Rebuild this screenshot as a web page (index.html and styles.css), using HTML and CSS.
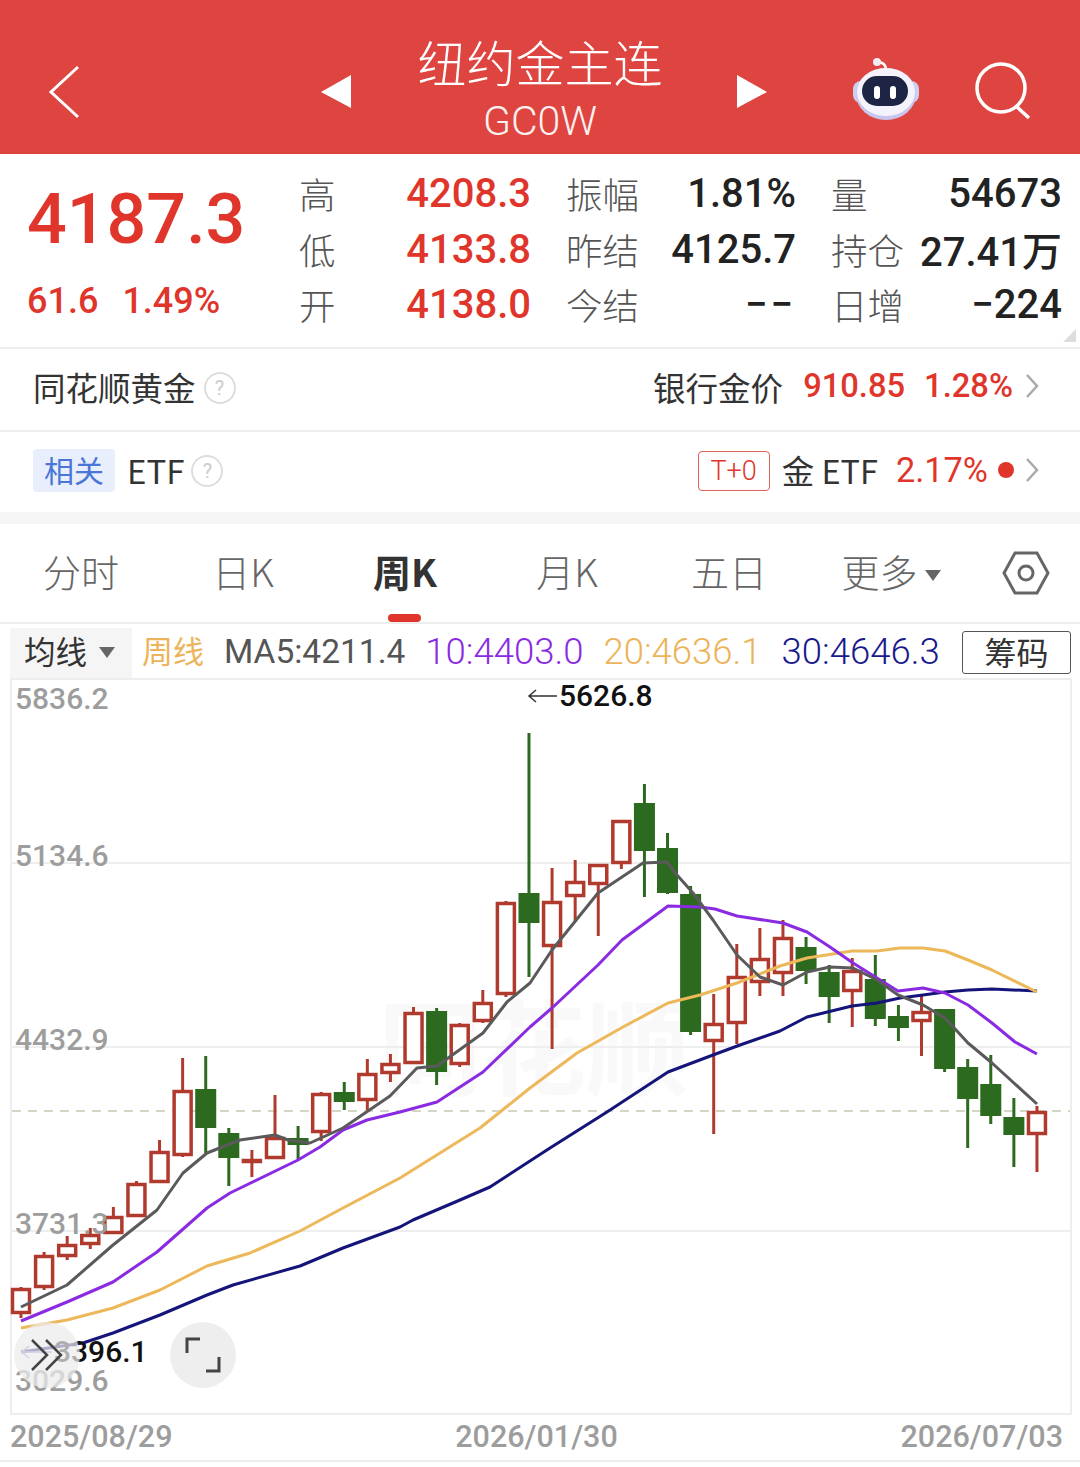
FILE: index.html
```html
<!DOCTYPE html>
<html>

<head>
  <meta charset="utf-8">
  <link rel="stylesheet" href="styles.css">
</head>

<body>
<!-- header -->
  <div class="header">
    <svg class="icon-back" width="32" height="56" viewBox="0 0 32 56"><path d="M30 3 L3 28 L30 53" /></svg>
    <svg class="icon-prev" width="32" height="34" viewBox="0 0 32 34"><path d="M31 0 L1 17 L31 33 Z" /></svg>
    <div class="title-box">
      <div class="title">纽约金主连</div>
      <div class="code">GC0W</div>
    </div>
    <svg class="icon-next" width="32" height="34" viewBox="0 0 32 34"><path d="M1 0 L31 17 L1 33 Z" /></svg>
    <svg class="icon-robot" width="68" height="64" viewBox="0 0 68 64">
      <path class="robot-line" d="M25 5 C31 5 34 8 34 13" />
      <circle class="robot-ball" cx="25" cy="5" r="4" />
      <rect class="robot-ear" x="1" y="24" width="66" height="22" rx="8" />
      <ellipse class="robot-shade" cx="34" cy="37" rx="30" ry="26" />
      <ellipse class="robot-head" cx="34" cy="35" rx="29" ry="24" />
      <rect class="robot-face" x="10" y="19" width="46" height="30" rx="15" />
      <rect class="robot-eye" x="22" y="29" width="6" height="13" rx="3" />
      <rect class="robot-eye" x="38" y="29" width="6" height="13" rx="3" />
    </svg>
    <svg class="icon-search" width="58" height="58" viewBox="0 0 58 58"><circle cx="27" cy="26" r="24" /><path d="M42 44 L55 56" /></svg>
  </div>

<!-- price -->
  <div class="stats">
    <div class="summary">
      <div class="price">4187.3</div>
      <div class="change"><span>61.6</span><span>1.49%</span></div>
    </div>
    <div class="stat-col col1">
      <div class="stat"><span class="label">高</span><span class="value red">4208.3</span></div>
      <div class="stat"><span class="label">低</span><span class="value red">4133.8</span></div>
      <div class="stat"><span class="label">开</span><span class="value red">4138.0</span></div>
    </div>
    <div class="stat-col">
      <div class="stat"><span class="label">振幅</span><span class="value">1.81%</span></div>
      <div class="stat"><span class="label">昨结</span><span class="value">4125.7</span></div>
      <div class="stat"><span class="label">今结</span><span class="value dashes">−−</span></div>
    </div>
    <div class="stat-col col3">
      <div class="stat"><span class="label">量</span><span class="value">54673</span></div>
      <div class="stat"><span class="label">持仓</span><span class="value">27.41万</span></div>
      <div class="stat"><span class="label">日增</span><span class="value">−224</span></div>
    </div>
    <div class="corner"></div>
  </div>

<!-- gold rows -->
  <div class="info-row line">
    <span class="info-name">同花顺黄金</span>
    <span class="help">?</span>
    <span class="info-right">
      <span class="info-name">银行金价</span>
      <span class="info-num first">910.85</span>
      <span class="info-num">1.28%</span>
      <svg class="chevron" width="14" height="26" viewBox="0 0 14 26"><path d="M2 2 L12 13 L2 24" /></svg>
    </span>
  </div>
  <div class="info-row">
    <span class="tag">相关</span>
    <span class="info-name etf-name">ETF</span>
    <span class="help small-gap">?</span>
    <span class="info-right">
      <span class="t0">T+0</span>
      <span class="info-name">金 ETF</span>
      <span class="info-num etf">2.17%</span>
      <span class="dot"></span>
      <svg class="chevron" width="14" height="26" viewBox="0 0 14 26"><path d="M2 2 L12 13 L2 24" /></svg>
    </span>
  </div>
  <div class="strip"></div>

<!-- tabs -->
  <div class="tabs">
    <div class="tab">分时</div>
    <div class="tab">日K</div>
    <div class="tab active">周K</div>
    <div class="tab">月K</div>
    <div class="tab">五日</div>
    <div class="tab">更多<span class="more-arrow"></span></div>
    <div class="tab-set">
      <svg width="48" height="44" viewBox="0 0 48 44"><path d="M13 2 H35 L46 22 L35 42 H13 L2 22 Z" /><circle cx="24" cy="22" r="7" /></svg>
    </div>
  </div>

<!-- ma -->
  <div class="ma-row">
    <div class="ma-select"><span class="ma-name">均线</span><span class="ma-arrow"></span></div>
    <span class="ma-week yellow">周线</span>
    <span class="ma ma5">MA5:4211.4</span>
    <span class="ma purple">10:4403.0</span>
    <span class="ma yellow">20:4636.1</span>
    <span class="ma navy">30:4646.3</span>
    <div class="chips">筹码</div>
  </div>

<!-- chart -->
  <div class="chart">
    <div class="watermark">同花顺</div>
    <svg id="kline" class="kline" width="1058" height="733" viewBox="12 680 1058 733"></svg>
    <span class="axis y1">5836.2</span>
    <span class="axis y2">5134.6</span>
    <span class="axis y3">4432.9</span>
    <span class="axis y4">3731.3</span>
    <span class="axis y5">3029.6</span>
    <div class="mark mark-high">
      <svg width="32" height="16" viewBox="0 0 32 16"><path d="M30 8 H2 M9 2 L2 8 L9 14" /></svg>
      <span>5626.8</span>
    </div>
    <div class="mark mark-low">
      <svg width="34" height="16" viewBox="0 0 34 16"><path d="M32 8 H2 M9 2 L2 8 L9 14" /></svg>
      <span>3396.1</span>
    </div>
    <div class="round-btn btn-expand">
      <svg width="34" height="34" viewBox="0 0 34 34"><path d="M2 2 L17 17 L2 32 M16 2 L31 17 L16 32" /></svg>
    </div>
    <div class="round-btn btn-full">
      <svg width="36" height="36" viewBox="0 0 36 36"><path d="M2 16 V2 H15 M34 20 V34 H21" /></svg>
    </div>
  </div>

<!-- dates -->
  <div class="dates">
    <span>2025/08/29</span>
    <span>2026/01/30</span>
    <span>2026/07/03</span>
  </div>

  <script src="chart.js"></script>
</body>

</html>
```

FILE: styles.css
```css
body {
  margin: 0;
  background-color: #fff;
  font-family: "Roboto", "Noto Sans CJK SC", sans-serif;
  overflow: hidden;
}

.red {
  color: #e0352b;
}

.yellow {
  color: #ecb45a;
}

.purple {
  color: #8a2be2;
}

.navy {
  color: #1a1a8c;
}

/* header */
.header {
  display: flex;
  align-items: center;
  height: 124px;
  padding: 30px 0 0 48px;
  background-color: #de4541;
}

.header svg path,
.header svg circle {
  fill: none;
  stroke: #fff;
}

.icon-back path {
  stroke-width: 3;
}

.icon-prev {
  margin-left: 240px;
}

.header .icon-prev path,
.header .icon-next path {
  fill: #fff;
  stroke: none;
}

.title-box {
  width: 384px;
  margin-top: -6px;
  padding-right: 8px;
  box-sizing: border-box;
  text-align: center;
  color: #fff;
}

.title {
  margin-top: -4px;
  font-family: "Noto Sans CJK SC", sans-serif;
  font-size: 49px;
  font-weight: 300;
  line-height: 64px;
}

.code {
  margin-top: 4px;
  font-size: 41px;
  font-weight: 300;
  line-height: 48px;
  opacity: 0.92;
}

.icon-robot {
  margin-left: 84px;
  margin-top: -6px;
}

.header .robot-line {
  stroke-width: 2.5;
}

.header .robot-ball {
  fill: #f4eef4;
  stroke: none;
}

.robot-ear {
  fill: #cfcdf0;
}

.robot-shade {
  fill: #c9c6ee;
}

.robot-head {
  fill: #f4f3fc;
}

.robot-face {
  fill: #1d2444;
}

.robot-eye {
  fill: #fff;
}

.icon-search {
  margin-left: 54px;
  margin-top: -2px;
}

.icon-search circle,
.icon-search path {
  stroke-width: 3.5;
}

/* price */
.stats {
  position: relative;
  display: flex;
  gap: 35px;
  height: 195px;
  padding-top: 12px;
  box-sizing: border-box;
  border-bottom: 2px solid #eee;
}

.summary {
  width: 272px;
  margin-right: -35px;
  padding-left: 27px;
}

.price {
  font-size: 70px;
  font-weight: 500;
  line-height: 76px;
  margin-top: 15px;
  color: #e0352b;
}

.change {
  display: flex;
  gap: 24px;
  margin-top: 23px;
  font-size: 36px;
  font-weight: 500;
  line-height: 42px;
  color: #e0352b;
}

.stat-col {
  width: 230px;
}

.stat-col.col1 {
  width: 232px;
}

.stat-col.col3 {
  width: 231px;
}

.stat {
  display: flex;
  justify-content: space-between;
  align-items: center;
  height: 55.5px;
}

.label {
  font-family: "Noto Sans CJK SC", sans-serif;
  font-size: 36.5px;
  font-weight: 300;
  color: #555;
}

.value {
  font-size: 40px;
  font-weight: 500;
  color: #222;
}

.value.red {
  color: #e0352b;
}

.dashes {
  letter-spacing: 3px;
}

.corner {
  position: absolute;
  right: 4px;
  bottom: 5px;
  width: 13px;
  height: 13px;
  background-color: #ddd;
  clip-path: polygon(100% 0, 100% 100%, 0 100%);
}

/* rows */
.info-row {
  display: flex;
  align-items: center;
  height: 75px;
  padding: 0 41px 5px 33px;
}

.info-row.line {
  height: 74px;
  padding-bottom: 7px;
  border-bottom: 2px solid #eee;
}

.info-name {
  font-family: "Noto Sans CJK SC", sans-serif;
  font-size: 32.5px;
  font-weight: 400;
  color: #333;
}

.etf-name {
  font-size: 33px;
}

.help {
  display: flex;
  align-items: center;
  justify-content: center;
  width: 28px;
  height: 28px;
  margin: 3px 0 0 8px;
  border: 2px solid #ddd;
  border-radius: 50%;
  font-size: 20px;
  color: #ccc;
}

.help.small-gap {
  margin: 2px 0 0 7px;
}

.info-right {
  display: flex;
  align-items: center;
  margin-left: auto;
}

.info-num {
  margin-left: 19px;
  font-size: 32.7px;
  font-weight: 500;
  color: #e0352b;
}

.info-num.first {
  margin-left: 20px;
}

.info-num.etf {
  margin-left: 18px;
  font-size: 34.3px;
  font-weight: 400;
}

.chevron {
  margin-left: 12px;
}

.chevron path {
  fill: none;
  stroke: #aaa;
  stroke-width: 2.5;
}

.tag {
  width: 82px;
  height: 43px;
  margin: 1px 12px 0 0;
  border-radius: 4px;
  background-color: #e8eefb;
  text-align: center;
  font-family: "Noto Sans CJK SC", sans-serif;
  font-size: 30px;
  line-height: 41px;
  color: #4a76d8;
}

.t0 {
  width: 70px;
  height: 38px;
  margin: 3px 12px 0 0;
  border: 1px solid #e0605a;
  border-radius: 4px;
  text-align: center;
  font-size: 27px;
  font-weight: 300;
  line-height: 39px;
  color: #e0352b;
}

.dot {
  width: 16px;
  height: 16px;
  margin-left: 10px;
  border-radius: 50%;
  background-color: #e0352b;
}

.dot + .chevron {
  margin-left: 11px;
}

.strip {
  height: 12px;
  background-color: #f5f5f5;
}

/* tabs */
.tabs {
  display: flex;
  height: 98px;
  border-bottom: 2px solid #eee;
}

.tab {
  position: relative;
  width: 162px;
  padding-top: 22px;
  text-align: center;
  font-family: "Noto Sans CJK SC", sans-serif;
  font-size: 38px;
  font-weight: 300;
  line-height: 50px;
  color: #666;
}

.tab.active {
  font-weight: 700;
  color: #333;
}

.tab.active::after {
  content: "";
  position: absolute;
  left: 64px;
  bottom: 0;
  width: 33px;
  height: 8px;
  border-radius: 4px;
  background-color: #e0352b;
}

.more-arrow {
  display: inline-block;
  margin-left: 7px;
  vertical-align: 6px;
  border-top: 11px solid #666;
  border-left: 8px solid transparent;
  border-right: 8px solid transparent;
}

.tab-set {
  display: flex;
  justify-content: center;
  width: 108px;
  padding-top: 27px;
}

.tab-set svg {
  fill: none;
  stroke: #666;
  stroke-width: 3;
}

/* ma */
.ma-row {
  display: flex;
  align-items: center;
  height: 54px;
  padding: 0 9px 0 10px;
}

.ma-select {
  display: flex;
  align-items: center;
  width: 108px;
  height: 50px;
  margin-top: 3px;
  padding-left: 14px;
  background-color: #f5f5f5;
  font-family: "Noto Sans CJK SC", sans-serif;
  font-size: 31.5px;
  color: #333;
}

.ma-name {
  margin-top: -6px;
}

.ma-arrow {
  margin-left: 12px;
  border-top: 11px solid #666;
  border-left: 8px solid transparent;
  border-right: 8px solid transparent;
}

.ma-week {
  margin: -3px 0 0 10px;
  font-family: "Noto Sans CJK SC", sans-serif;
  font-size: 31px;
}

.ma {
  margin-left: 20px;
  font-size: 36.5px;
  font-weight: 300;
}

.ma5 {
  font-size: 33.5px;
  font-weight: 400;
  color: #555;
}

.chips {
  width: 107px;
  height: 41px;
  margin: 2px 0 0 auto;
  border: 1px solid #555;
  border-radius: 3px;
  text-align: center;
  font-family: "Noto Sans CJK SC", sans-serif;
  font-size: 32px;
  line-height: 38px;
  color: #333;
}

/* chart */
.chart {
  position: relative;
  width: 1058px;
  height: 733px;
  margin-left: 10px;
  border: 2px solid #eee;
}

.kline {
  position: absolute;
  left: 0;
  top: 0;
  overflow: visible;
}

.grid-line {
  stroke: #eee;
  stroke-width: 2;
}

.last-line {
  stroke: #c9c9b4;
  stroke-width: 1.5;
  stroke-dasharray: 9 7;
}

.wick {
  stroke-width: 3;
}

.up {
  stroke: #b03a2e;
}

.down {
  stroke: #2c6a1f;
}

.body-up {
  fill: #fff;
  stroke: #b03a2e;
  stroke-width: 3.5;
}

.body-down {
  fill: #2c6a1f;
}

.ma-line {
  fill: none;
  stroke-width: 3;
  stroke-linejoin: round;
}

.line5 {
  stroke: #5a5a5a;
}

.line10 {
  stroke: #8a2be2;
}

.line20 {
  stroke: #ecb85a;
}

.line30 {
  stroke: #14147a;
}

.watermark {
  position: absolute;
  left: 366px;
  top: 308px;
  font-family: "Noto Sans CJK SC", sans-serif;
  font-size: 104px;
  font-weight: 700;
  line-height: 110px;
  color: #f9f9f9;
}

.axis {
  position: absolute;
  left: 3px;
  font-size: 30px;
  font-weight: 500;
  line-height: 36px;
  color: #9d9d9d;
}

.y1 {
  top: 1px;
}

.y2 {
  top: 158px;
}

.y3 {
  top: 342px;
}

.y4 {
  top: 526px;
}

.y5 {
  top: 683px;
}

.mark {
  position: absolute;
  display: flex;
  align-items: center;
  font-size: 30px;
  font-weight: 500;
  line-height: 36px;
  color: #111;
}

.mark svg {
  fill: none;
  stroke: #333;
  stroke-width: 1.5;
}

.mark-high {
  left: 515px;
  top: -2px;
}

.mark-low {
  left: 8px;
  top: 654px;
}

.mark-low svg {
  stroke: #8a84c8;
}

.round-btn {
  position: absolute;
  top: 642px;
  display: flex;
  align-items: center;
  justify-content: center;
  width: 66px;
  height: 66px;
  border-radius: 50%;
  background-color: rgba(236, 236, 236, 0.72);
}

.round-btn svg {
  fill: none;
  stroke: #444;
  stroke-width: 3;
}

.btn-expand {
  left: 2px;
}

.btn-expand svg path {
  stroke-width: 2.5;
}

.btn-full {
  left: 158px;
  background-color: #eee;
}

/* dates */
.dates {
  display: flex;
  justify-content: space-between;
  height: 45px;
  padding: 0 17px 0 10px;
  border-bottom: 2px solid #eee;
  font-size: 30.5px;
  font-weight: 500;
  line-height: 44px;
  color: #9d9d9d;
}
```

FILE: chart.js
```js
// x of first candle, then one every 23.09px
const startX = 21;
const stepX = 23.09;

// [high, top of body, bottom of body, low, up?]
const candles = [
  [1287, 1288, 1314, 1318, 1], [1252, 1255, 1288, 1290, 1], [1236, 1244, 1257, 1260, 1],
  [1228, 1234, 1245, 1249, 1], [1207, 1216, 1234, 1234, 1], [1181, 1183, 1217, 1217, 1],
  [1140, 1151, 1183, 1183, 1], [1058, 1090, 1156, 1157, 1], [1056, 1089, 1128, 1153, 0],
  [1128, 1133, 1158, 1186, 0], [1150, 1159, 1161, 1177, 1], [1095, 1137, 1159, 1159, 1],
  [1126, 1138, 1145, 1159, 0], [1092, 1093, 1133, 1141, 1], [1082, 1092, 1102, 1110, 0],
  [1059, 1073, 1101, 1110, 1], [1054, 1063, 1074, 1082, 1], [1007, 1012, 1064, 1064, 1],
  [1008, 1011, 1072, 1085, 0], [1023, 1024, 1065, 1067, 1], [990, 1002, 1022, 1023, 1],
  [901, 902, 995, 997, 1], [733, 893, 923, 977, 0], [868, 901, 947, 1049, 1],
  [860, 881, 897, 922, 1], [864, 864, 885, 936, 1], [820, 820, 864, 869, 1],
  [784, 803, 851, 897, 0], [833, 848, 893, 894, 0], [886, 894, 1032, 1035, 0],
  [994, 1023, 1042, 1134, 1], [944, 976, 1024, 1044, 1], [928, 958, 983, 996, 1],
  [920, 937, 974, 996, 1], [937, 947, 971, 984, 0], [965, 972, 997, 1023, 0],
  [958, 970, 992, 1027, 1], [955, 979, 1019, 1026, 0], [1005, 1016, 1028, 1041, 0],
  [995, 1011, 1022, 1056, 1], [1009, 1009, 1069, 1072, 0], [1059, 1067, 1099, 1148, 0],
  [1055, 1084, 1116, 1124, 0], [1098, 1117, 1135, 1167, 0], [1106, 1111, 1135, 1172, 1]
];

const lines = {
  line30: '21,1352 83,1343 113,1333 160,1315 207,1295 233,1285 300,1266 343,1248 400,1227 413,1220 460,1200 490,1187 550,1148 607,1112 668,1072 713,1055 740,1045 780,1031 807,1017 852,1006 877,1003 900,998 923,995 945,992 968,990 992,989 1037,991',
  line20: '21,1328 67,1320 113,1308 160,1290 207,1266 250,1253 300,1231 343,1208 400,1178 480,1128 530,1088 577,1053 623,1027 668,1003 700,995 737,983 780,966 807,958 852,951 877,951 900,948 923,948 945,951 968,960 992,970 1037,992',
  line10: '21,1321 67,1302 113,1282 157,1252 207,1208 230,1193 298,1160 320,1147 343,1130 367,1120 400,1112 437,1102 483,1072 530,1027 552,1008 598,965 622,940 645,923 668,906 700,907 715,909 737,916 783,923 807,932 830,947 853,963 877,978 898,991 923,988 945,993 968,1005 992,1023 1015,1042 1037,1054',
  line5: '21,1307 67,1285 113,1245 157,1210 183,1173 207,1153 240,1140 275,1135 288,1140 310,1143 343,1128 390,1096 417,1068 437,1066 483,1033 507,1002 530,983 552,950 598,893 643,863 667,862 677,875 693,893 713,920 737,955 760,977 783,985 807,972 830,967 853,968 877,980 898,995 923,1005 945,1018 968,1043 992,1063 1037,1104'
};

const svg = document.getElementById('kline');

function add(name, attrs) {
  const el = document.createElementNS('http://www.w3.org/2000/svg', name);
  Object.keys(attrs).forEach(key => el.setAttribute(key, attrs[key]));
  svg.appendChild(el);
  return el;
}

// grid
[863, 1047, 1231].forEach(y => {
  add('line', { x1: 12, x2: 1070, y1: y, y2: y, class: 'grid-line' });
});
add('line', { x1: 12, x2: 1070, y1: 1111, y2: 1111, class: 'last-line' });

// candles
candles.forEach((c, i) => {
  const x = startX + i * stepX;
  const kind = c[4] ? 'up' : 'down';
  add('line', { x1: x, x2: x, y1: c[0], y2: c[3], class: 'wick ' + kind });
  if (c[4]) {
    add('rect', { x: x - 8.5, y: c[1] + 1.5, width: 17, height: Math.max(c[2] - c[1] - 3, 1), class: 'body-up' });
  } else {
    add('rect', { x: x - 10.5, y: c[1], width: 21, height: c[2] - c[1], class: 'body-down' });
  }
});

// ma lines
Object.keys(lines).forEach(name => {
  add('polyline', { points: lines[name], class: 'ma-line ' + name });
});
```
